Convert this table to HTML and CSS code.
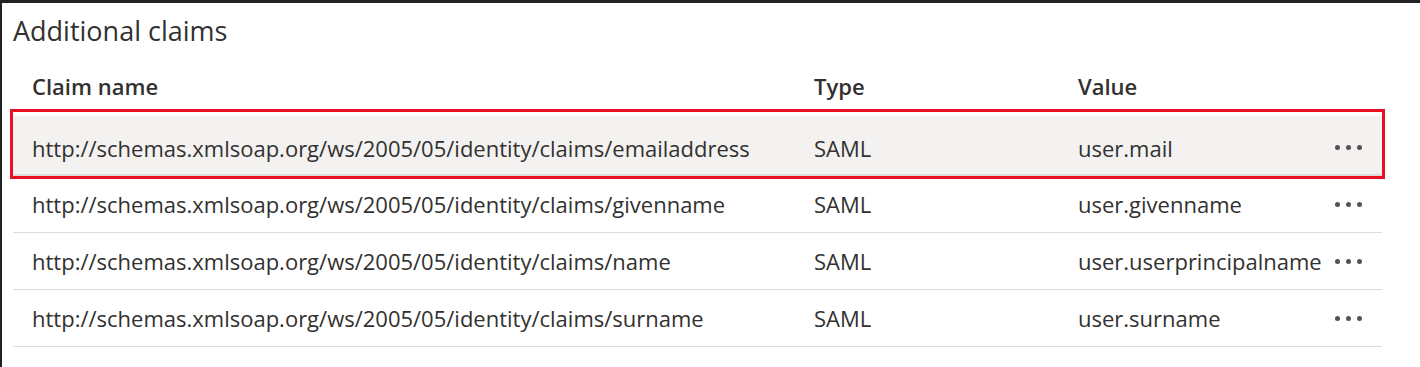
FILE: index.html
```html
<!DOCTYPE html>
<html lang="en">
<head>
<meta charset="utf-8">
<title>Additional claims</title>
<link rel="stylesheet" href="styles.css">
</head>
<body>
<div class="frame">
  <h2 class="title">Additional claims</h2>
  <div class="table">
    <div class="row head">
      <div class="cell">Claim name</div>
      <div class="cell">Type</div>
      <div class="cell">Value</div>
      <div class="cell"></div>
    </div>
    <div class="row selected">
      <div class="cell">http://schemas.xmlsoap.org/ws/2005/05/identity/claims/emailaddress</div>
      <div class="cell">SAML</div>
      <div class="cell">user.mail</div>
      <div class="cell more"><span></span><span></span><span></span></div>
    </div>
    <div class="row">
      <div class="cell">http://schemas.xmlsoap.org/ws/2005/05/identity/claims/givenname</div>
      <div class="cell">SAML</div>
      <div class="cell">user.givenname</div>
      <div class="cell more"><span></span><span></span><span></span></div>
    </div>
    <div class="row">
      <div class="cell">http://schemas.xmlsoap.org/ws/2005/05/identity/claims/name</div>
      <div class="cell">SAML</div>
      <div class="cell">user.userprincipalname</div>
      <div class="cell more"><span></span><span></span><span></span></div>
    </div>
    <div class="row">
      <div class="cell">http://schemas.xmlsoap.org/ws/2005/05/identity/claims/surname</div>
      <div class="cell">SAML</div>
      <div class="cell">user.surname</div>
      <div class="cell more"><span></span><span></span><span></span></div>
    </div>
  </div>
</div>
</body>
</html>
```
FILE: styles.css
```css
html, body {
  margin: 0;
  padding: 0;
  background: #ffffff;
}
body {
  font-family: "Open Sans", "Noto Sans", "Liberation Sans", sans-serif;
  color: #323130;
}
.frame {
  height: 367px;
  box-sizing: border-box;
  border-top: 3px solid #1f2326;
  border-left: 2px solid #1f2326;
  padding: 0 0 0 11px;
}
.title {
  margin: 0;
  font-weight: 400;
  font-size: 27px;
  line-height: 36px;
  padding-top: 10px;
  height: 45px;
  box-sizing: border-box;
  color: #323130;
}
.table {
  width: 1369px;
  margin-top: 23px;
}
.row {
  display: grid;
  grid-template-columns: 782px 264px 257px 1fr;
  align-items: center;
  padding-left: 19px;
  height: 56px;
  border-bottom: 1px solid #dcdcdc;
  font-size: 22px;
  line-height: 30px;
}
.row.head {
  height: 30px;
  padding-bottom: 15px;
  border-bottom: none;
  font-weight: 600;
}
.row.selected {
  position: relative;
  height: 53px;
  padding-top: 5px;
  background: #f3f2f1;
  border-bottom: 2px solid #dcdcdc;
}
.row.selected::after {
  content: "";
  position: absolute;
  top: -7px;
  bottom: -5px;
  left: -3px;
  right: -3px;
  border: 3px solid #e81123;
  pointer-events: none;
}
.cell {
  white-space: nowrap;
}
.more {
  display: flex;
  gap: 6px;
  align-items: center;
}
.more span {
  width: 5px;
  height: 5px;
  border-radius: 50%;
  background: #555352;
}
```
